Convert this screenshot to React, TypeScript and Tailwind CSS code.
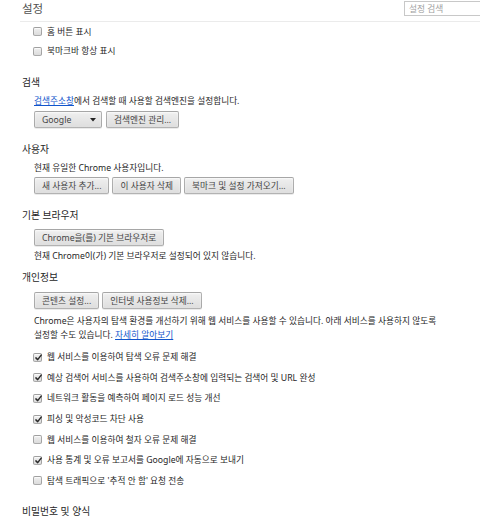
import React from "react";

const FONT = { fontFamily: '"Noto Sans", "Noto Sans CJK KR", sans-serif' };

function Btn({ children, w }: { children: React.ReactNode; w?: string }) {
  return (
    <div
      className={
        "h-[17px] px-[7px] flex items-center rounded-[2px] border border-[rgba(0,0,0,0.25)] bg-linear-to-b from-[#efefef] to-[#dedede] text-[#444] shadow-[0_1px_0_rgba(0,0,0,0.08),inset_0_1px_2px_rgba(255,255,255,0.75)] whitespace-nowrap " +
        (w ?? "")
      }
    >
      {children}
    </div>
  );
}

function Box({ checked }: { checked?: boolean }) {
  return (
    <div className="relative w-[9px] h-[9px] shrink-0 rounded-[2px] border border-[rgba(0,0,0,0.28)] bg-linear-to-b from-[#efefef] to-[#dcdcdc] shadow-[inset_0_1px_1px_rgba(255,255,255,0.8)]">
      {checked && (
        <svg className="absolute left-[0px] top-[-1px]" width="9" height="9" viewBox="0 0 9 9">
          <path d="M1.9 4.9 L3.7 6.6 L7.2 2.1" fill="none" stroke="#2a2a2a" strokeWidth="1.5" strokeLinecap="round" strokeLinejoin="round" />
        </svg>
      )}
    </div>
  );
}

function Row({ checked, children, h }: { checked?: boolean; children: React.ReactNode; h: string }) {
  return (
    <div className={"flex items-center pl-[33px] " + h}>
      <Box checked={checked} />
      <span className="ml-[5px] whitespace-nowrap">{children}</span>
    </div>
  );
}

function Heading({ children, mt }: { children: React.ReactNode; mt: string }) {
  return (
    <div className={"h-[14px] flex items-center pl-[22px] text-[9.8px] text-[#262626] " + mt}>{children}</div>
  );
}

function Line({ children, mt }: { children: React.ReactNode; mt: string }) {
  return <div className={"h-[14px] flex items-center pl-[34px] whitespace-nowrap " + mt}>{children}</div>;
}

export default function App() {
  return (
    <div style={FONT} className="w-[480px] h-[527px] overflow-hidden bg-white text-[8.7px] leading-[14px] text-[#262626]">
      {/* header */}
      <div className="ml-[20px] h-[22px] border-b border-[#ebebeb] flex items-start">
        <div className="pl-[2px] pt-[1px] h-[16px] flex items-center text-[11.5px] text-[#505050]">설정</div>
        <div className="ml-auto mr-[-10px] mt-[1px] w-[86px] h-[15px] border border-[#c8c8c8] flex items-center pl-[4px] text-[#a0a0a0] bg-white">
          설정 검색
        </div>
      </div>

      <Row h="h-[19px]">홈 버튼 표시</Row>
      <Row h="h-[20px]">북마크바 항상 표시</Row>

      <Heading mt="mt-[15px]">검색</Heading>
      <Line mt="mt-[4px]">
        <span className="text-[#1155cc] underline">검색주소창</span>에서 검색할 때 사용할 검색엔진을 설정합니다.
      </Line>
      <div className="mt-[3px] pl-[34px] flex gap-[4px]">
        <Btn w="w-[68px] justify-between pr-[5px]">
          <span>Google</span>
          <svg width="6" height="4" viewBox="0 0 6 4">
            <path d="M0 0 L6 0 L3 3.6 Z" fill="#222" />
          </svg>
        </Btn>
        <Btn>검색엔진 관리...</Btn>
      </div>

      <Heading mt="mt-[15px]">사용자</Heading>
      <Line mt="mt-[4px]">현재 유일한 Chrome 사용자입니다.</Line>
      <div className="mt-[2px] pl-[34px] flex gap-[3px]">
        <Btn>새 사용자 추가...</Btn>
        <Btn>이 사용자 삭제</Btn>
        <Btn>북마크 및 설정 가져오기...</Btn>
      </div>

      <Heading mt="mt-[15px]">기본 브라우저</Heading>
      <div className="mt-[6px] pl-[34px] flex">
        <Btn>Chrome을(를) 기본 브라우저로</Btn>
      </div>
      <Line mt="mt-[3px]">현재 Chrome이(가) 기본 브라우저로 설정되어 있지 않습니다.</Line>

      <Heading mt="mt-[8px]">개인정보</Heading>
      <div className="mt-[7px] pl-[34px] flex gap-[3px]">
        <Btn>콘텐츠 설정...</Btn>
        <Btn>인터넷 사용정보 삭제...</Btn>
      </div>
      <div className="mt-[5px] pl-[34px] pr-[20px]">
        <div className="h-[14px] flex items-center whitespace-nowrap">
          Chrome은 사용자의 탐색 환경를 개선하기 위해 웹 서비스를 사용할 수 있습니다. 아래 서비스를 사용하지 않도록
        </div>
        <div className="h-[14px] flex items-center whitespace-nowrap">
          설정할 수도 있습니다.&nbsp;<span className="text-[#1155cc] underline">자세히 알아보기</span>
        </div>
      </div>

      <div className="mt-[5px]">
        <Row checked h="h-[20.6px]">웹 서비스를 이용하여 탐색 오류 문제 해결</Row>
        <Row checked h="h-[20.6px]">예상 검색어 서비스를 사용하여 검색주소창에 입력되는 검색어 및 URL 완성</Row>
        <Row checked h="h-[20.6px]">네트워크 활동을 예측하여 페이지 로드 성능 개선</Row>
        <Row checked h="h-[20.6px]">피싱 및 악성코드 차단 사용</Row>
        <Row h="h-[20.6px]">웹 서비스를 이용하여 철자 오류 문제 해결</Row>
        <Row checked h="h-[20.6px]">사용 통계 및 오류 보고서를 Google에 자동으로 보내기</Row>
        <Row h="h-[20.6px]">탐색 트래픽으로 '추적 안 함' 요청 전송</Row>
      </div>

      <Heading mt="mt-[14px]">비밀번호 및 양식</Heading>
    </div>
  );
}
